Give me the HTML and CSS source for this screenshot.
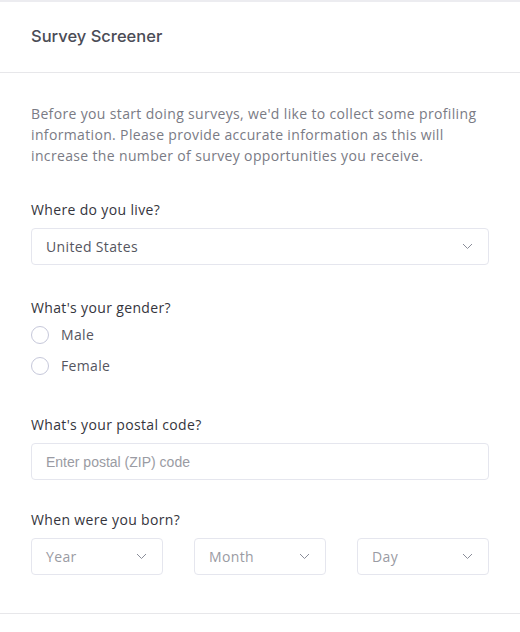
FILE: index.html
```html
<!DOCTYPE html>
<html lang="en">
<head>
<meta charset="utf-8">
<title>Survey Screener</title>
<link rel="stylesheet" href="styles.css">
</head>
<body>
<div class="modal">
  <header class="modal-header">
    <h1 class="title">Survey Screener</h1>
  </header>
  <section class="modal-body">
    <p class="intro">Before you start doing surveys, we'd like to collect some profiling information. Please provide accurate information as this will increase the number of survey opportunities you receive.</p>

    <div class="field field-country">
      <div class="label">Where do you live?</div>
      <div class="select">
        <span class="select-value">United States</span>
        <svg class="chev" width="11" height="7" viewBox="0 0 11 7"><path d="M1 1l4.5 4.5L10 1" fill="none" stroke="#8a8d99" stroke-width="1"/></svg>
      </div>
    </div>

    <div class="field field-gender">
      <div class="label label-tight">What's your gender?</div>
      <div class="radios">
        <div class="radio"><span class="circle"></span><span class="radio-text">Male</span></div>
        <div class="radio"><span class="circle"></span><span class="radio-text">Female</span></div>
      </div>
    </div>

    <div class="field field-postal">
      <div class="label">What's your postal code?</div>
      <div class="input"><span class="placeholder">Enter postal (ZIP) code</span></div>
    </div>

    <div class="field field-born">
      <div class="label">When were you born?</div>
      <div class="date-row">
        <div class="select small"><span class="select-ph">Year</span><svg class="chev" width="11" height="7" viewBox="0 0 11 7"><path d="M1 1l4.5 4.5L10 1" fill="none" stroke="#8a8d99" stroke-width="1"/></svg></div>
        <div class="select small"><span class="select-ph">Month</span><svg class="chev" width="11" height="7" viewBox="0 0 11 7"><path d="M1 1l4.5 4.5L10 1" fill="none" stroke="#8a8d99" stroke-width="1"/></svg></div>
        <div class="select small"><span class="select-ph">Day</span><svg class="chev" width="11" height="7" viewBox="0 0 11 7"><path d="M1 1l4.5 4.5L10 1" fill="none" stroke="#8a8d99" stroke-width="1"/></svg></div>
      </div>
    </div>
  </section>
  <div class="modal-footer"></div>
</div>
</body>
</html>
```
FILE: styles.css
```css
html, body {
  margin: 0;
  padding: 0;
  background: #ffffff;
}
body {
  font-family: "Open Sans", "Liberation Sans", sans-serif;
  color: #333;
  letter-spacing: 0.35px;
}
.modal {
  border-top: 2px solid #ececf0;
}
.modal-header {
  height: 70px;
  display: flex;
  align-items: center;
  padding: 0 31px;
  border-bottom: 1px solid #e7e7ea;
}
.title {
  margin: 0 0 2px 0;
  font-family: "Inter", "Liberation Sans", sans-serif;
  font-size: 16.5px;
  font-weight: 500;
  color: #4b4c56;
  letter-spacing: 0;
}
.modal-body {
  padding: 30px 31px 30px 31px;
}
.intro {
  margin: 0;
  font-size: 14px;
  line-height: 21px;
  color: #7a7b85;
}
.field-country { margin-top: 34px; }
.field-gender { margin-top: 33px; }
.field-postal { margin-top: 40px; }
.field-born { margin-top: 30px; }
.label {
  font-size: 14px;
  line-height: 20px;
  color: #35353d;
  margin-bottom: 8px;
}
.label-tight { margin-bottom: 7px; }
.select, .input {
  box-sizing: border-box;
  height: 37px;
  border: 1px solid #e5e6ee;
  border-radius: 4px;
  display: flex;
  align-items: center;
  justify-content: space-between;
  padding: 0 15px 0 14px;
  font-size: 14px;
}
.select-value { color: #55565f; }
.select-ph { color: #9a9ba3; }
.placeholder {
  font-family: "Liberation Sans", sans-serif;
  color: #9a9ba3;
  font-size: 14px;
  letter-spacing: 0;
}
.chev { display: block; }
.radios {
  display: flex;
  flex-direction: column;
  gap: 12px;
  margin-top: 2px;
}
.radio {
  display: flex;
  align-items: center;
  height: 19px;
}
.circle {
  box-sizing: border-box;
  width: 18px;
  height: 18px;
  border: 1px solid #c6c8da;
  border-radius: 50%;
  margin-right: 12px;
}
.radio-text {
  font-size: 14px;
  color: #55565f;
}
.date-row {
  display: grid;
  grid-template-columns: 1fr 1fr 1fr;
  column-gap: 31px;
}
.modal-footer {
  border-top: 1px solid #e7e7ea;
  margin-top: 8px;
}
```
